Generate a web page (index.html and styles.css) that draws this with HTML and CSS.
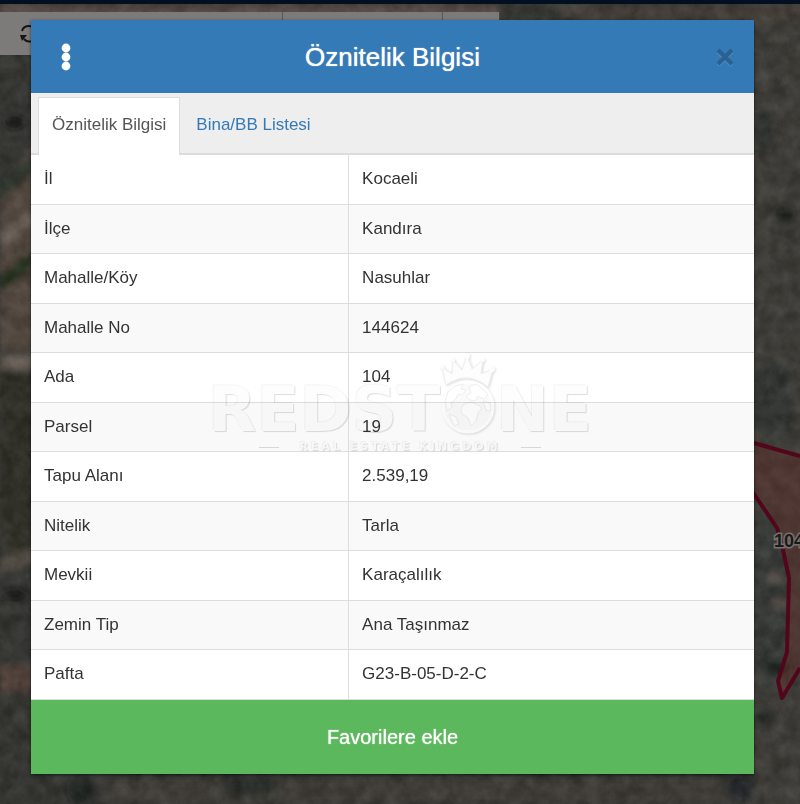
FILE: index.html
```html
<!DOCTYPE html>
<html lang="tr">
<head>
  <meta charset="UTF-8" />
  <meta name="viewport" content="width=device-width, initial-scale=1.0" />
  <title>Öznitelik Bilgisi</title>
  <link rel="stylesheet" href="styles.css">
</head>
<body>
  <div class="map-page">
    <svg class="map" viewBox="0 0 800 804" preserveAspectRatio="xMidYMid slice" aria-hidden="true">
      <defs>
        <filter id="soft" x="-20%" y="-20%" width="140%" height="140%"><feGaussianBlur stdDeviation="3" /></filter>
        <filter id="grain" x="0" y="0" width="100%" height="100%" color-interpolation-filters="sRGB">
          <feTurbulence type="fractalNoise" baseFrequency="0.07" numOctaves="4" seed="8" />
          <feColorMatrix values="0.6 0.4 0 0 -0.27  0.6 0.4 0 0 -0.27  0.6 0.4 0 0 -0.28  0 0 0 0 0.18" />
        </filter>
      </defs>
      <rect width="800" height="804" fill="#343431" />
      <rect x="745" width="55" height="804" fill="#3f3d38" />
      <g filter="url(#soft)">
        <path d="M0 4H500V22H0z" fill="#5a4d47" />
        <path d="M560 4H800V20H560z" fill="#443f38" />
        <path d="M0 202L40 130V350H0z" fill="#54493f" />
        <path d="M0 184L40 150V166L0 200z" fill="#2b3529" />
        <path d="M0 230L34 208V222L0 252z" fill="#6d6058" />
        <path d="M0 275L34 250V268L0 292z" fill="#27331f" />
        <path d="M0 292L36 268V350H0z" fill="#54483f" />
        <path d="M0 354H36V370H0z" fill="#6c635a" />
        <path d="M0 370H40V545L0 560z" fill="#2f2f28" />
        <path d="M0 562L34 546V562L0 576z" fill="#5c544c" />
        <path d="M0 665H34V692H0z" fill="#54433b" />
        <ellipse cx="14" cy="122" rx="10" ry="6" fill="#141915" />
        <ellipse cx="14" cy="596" rx="13" ry="6" fill="#121912" />
        <ellipse cx="784" cy="214" rx="9" ry="8" fill="#181e17" />
        <ellipse cx="764" cy="130" rx="9" ry="20" fill="#2c2f2b" />
        <ellipse cx="772" cy="400" rx="22" ry="40" fill="#323632" />
        <ellipse cx="770" cy="600" rx="18" ry="90" fill="#373b37" />
        <ellipse cx="775" cy="578" rx="7" ry="6" fill="#5d534c" />
        <ellipse cx="780" cy="603" rx="7" ry="5" fill="#594b46" />
        <ellipse cx="778" cy="667" rx="12" ry="8" fill="#141b16" />
        <ellipse cx="766" cy="718" rx="9" ry="8" fill="#252b26" />
        <path d="M100 780H730V804H100z" fill="#403d39" />
        <ellipse cx="82" cy="790" rx="12" ry="14" fill="#1d231f" />
        <ellipse cx="250" cy="788" rx="30" ry="8" fill="#262c27" />
        <ellipse cx="740" cy="788" rx="14" ry="12" fill="#22272a" />
      </g>
      <rect width="800" height="804" filter="url(#grain)" />
      <path d="M750 442L800 456V668L782 697L778 681L787 652L789 578L782 545L777 528L752 491z" fill="#6a302d" fill-opacity="0.4" />
      <path d="M750 442L800 456M752 491L777 528L782 545L789 578L787 652L778 681L782 698L800 668" fill="none" stroke="#51061c" stroke-width="4" stroke-linejoin="round" />
      <text class="parcel-label" x="774" y="547">104</text>
    </svg>
    <div class="top-bar"></div>
    <div class="toolbar">
      <button class="tool tool-refresh" type="button" aria-label="Yenile">
        <svg width="20" height="20" viewBox="0 0 20 20" aria-hidden="true">
          <path d="M3 7A7 7 0 0 1 16 6M17 13A7 7 0 0 1 5 15" fill="none" stroke="#151515" stroke-width="2" />
          <path d="M1 11H8L3 17zM19 9H12L17 3z" fill="#151515" />
        </svg>
      </button>
      <div class="tool"></div>
      <div class="tool"></div>
    </div>
  </div>

  <div class="overlay">
    <div class="modal" role="dialog" aria-labelledby="modalTitle">
      <div class="modal-header">
        <button class="icon-button" type="button" aria-label="Menü">
          <svg width="10" height="28" viewBox="0 0 10 28" fill="#fff" aria-hidden="true">
            <circle cx="5" cy="5" r="4.4" /><circle cx="5" cy="14" r="4.4" /><circle cx="5" cy="23" r="4.4" />
          </svg>
        </button>
        <h1 id="modalTitle">Öznitelik Bilgisi</h1>
        <button class="icon-button close" type="button" aria-label="Kapat">
          <svg width="18" height="20" viewBox="0 0 18 20" fill="none" stroke-width="4" aria-hidden="true">
            <path d="M2 5L16 19M16 5L2 19" stroke="#4585bd" />
            <path d="M2 3L16 17M16 3L2 17" stroke="#2a6191" />
          </svg>
        </button>
      </div>
      <nav class="tabs">
        <a class="tab active" href="#oznitelik">Öznitelik Bilgisi</a>
        <a class="tab" href="#bina">Bina/BB Listesi</a>
      </nav>
      <table class="attributes" id="oznitelik">
        <tbody>
          <tr><th scope="row">İl</th><td>Kocaeli</td></tr>
          <tr><th scope="row">İlçe</th><td>Kandıra</td></tr>
          <tr><th scope="row">Mahalle/Köy</th><td>Nasuhlar</td></tr>
          <tr><th scope="row">Mahalle No</th><td>144624</td></tr>
          <tr><th scope="row">Ada</th><td>104</td></tr>
          <tr><th scope="row">Parsel</th><td>19</td></tr>
          <tr><th scope="row">Tapu Alanı</th><td>2.539,19</td></tr>
          <tr><th scope="row">Nitelik</th><td>Tarla</td></tr>
          <tr><th scope="row">Mevkii</th><td>Karaçalılık</td></tr>
          <tr><th scope="row">Zemin Tip</th><td>Ana Taşınmaz</td></tr>
          <tr><th scope="row">Pafta</th><td>G23-B-05-D-2-C</td></tr>
        </tbody>
      </table>
      <button class="favorite" type="button">Favorilere ekle</button>
    </div>
  </div>

  <div class="watermark">
    <div class="brand">
      <span>REDST</span>
      <svg class="globe" width="56" height="84" viewBox="0 0 56 84" aria-hidden="true">
        <path d="M6 32L2 14L12 21L13 7L22 17L27 2L32 16L43 7L41 21L53 16L48 34Q28 17 6 32z" fill="#fdfdfd" />
        <g fill="#fdfdfd"><circle cx="2" cy="14" r="2" /><circle cx="13" cy="7" r="2" /><circle cx="27" cy="3" r="3" /><circle cx="43" cy="7" r="2" /><circle cx="52" cy="16" r="3" /></g>
        <circle cx="28" cy="54" r="25" fill="#fafafa" stroke="#fff" stroke-width="3" />
        <path d="M5 48L8 39L15 33L23 31L21 36L26 37L22 42L18 41L16 46L11 50L12 54L7 58zM29 34L36 31L43 36L48 42L44 46L38 43L35 48L30 47L26 43L31 40zM24 51L31 49L38 52L42 55L38 60L36 68L31 73L28 65L22 61L21 56zM43 48L50 50L51 58L46 57zM9 61L16 64L19 71L14 73z" fill="#fff" />
      </svg>
      <span>NE</span>
    </div>
    <div class="tagline">REAL ESTATE KINGDOM</div>
  </div>
</body>
</html>
```

FILE: styles.css
```css
* {
  box-sizing: border-box;
}
body {
  margin: 0;
  min-height: 100vh;
  font-family: "Liberation Sans", Arial, sans-serif;
  font-size: 17px;
  line-height: 24px;
  color: #333;
  background: #343431;
}
button {
  font-family: inherit;
  border: none;
  cursor: pointer;
}
.map-page {
  position: fixed;
  inset: 0;
}
.map {
  position: absolute;
  width: 100%;
  height: 100%;
}
.parcel-label {
  font-size: 18px;
  font-weight: bold;
  fill: #191919;
  stroke: #77716f;
  stroke-width: 3px;
  paint-order: stroke;
}
.top-bar {
  position: relative;
  height: 4px;
  background: #020f20;
}
.toolbar {
  position: relative;
  display: grid;
  grid-template-columns: 282fr 160fr 57fr;
  width: 499px;
  max-width: 100%;
  height: 43px;
  margin-top: 8px;
  background: #7d7b7a;
}
.tool {
  border-left: 1px solid #555;
}
.tool-refresh {
  display: flex;
  align-items: center;
  padding: 0 19px;
  border: none;
  background: none;
}
.overlay {
  position: relative;
  padding: 20px 46px 31px 31px;
}
.modal {
  background: #fff;
  box-shadow: 0 1px 3px rgba(0, 0, 0, 0.6);
}
.modal-header {
  display: flex;
  align-items: center;
  justify-content: space-between;
  height: 73px;
  padding: 0 14px 0 20px;
  background: #337ab7;
  color: #fff;
}
.modal-header h1 {
  margin: 0;
  font-size: 26px;
  font-weight: normal;
  text-shadow: 0 0 1px #fff;
}
.icon-button {
  display: flex;
  align-items: center;
  justify-content: center;
  width: 30px;
  height: 40px;
  padding: 0;
  background: none;
}
.close {
  width: 36px;
  padding-left: 6px;
}
.tabs {
  display: flex;
  gap: 2px;
  padding: 4px 7px 0;
  background: #eee;
  border-bottom: 2px solid #ddd;
}
.tab {
  padding: 15px 13px 18px;
  margin-bottom: -2px;
  border: 1px solid transparent;
  border-bottom: none;
  color: #337ab7;
  text-decoration: none;
}
.tab.active {
  background: #fff;
  border-color: #ddd;
  color: #555;
}
.attributes {
  width: 100%;
  border-collapse: separate;
  border-spacing: 0;
  table-layout: fixed;
}
.attributes th,
.attributes td {
  padding: 12px 13px 13px;
  border-bottom: 1px solid #ddd;
  font-weight: normal;
  text-align: left;
}
.attributes th {
  width: 44%;
  border-right: 1px solid #ddd;
}
.attributes tr:nth-child(even) > * {
  padding-bottom: 12px;
  background: #f9f9f9;
}
.favorite {
  display: block;
  width: 100%;
  padding: 24px;
  background: #5cb85c;
  color: #fff;
  font-size: 20px;
  line-height: 26px;
  text-shadow: 0 0 1px #fff;
}
.watermark {
  position: absolute;
  top: 353px;
  left: 0;
  right: 0;
  mix-blend-mode: multiply;
  pointer-events: none;
  color: #fdfdfd;
  font-family: "DejaVu Sans", sans-serif;
  font-weight: bold;
  text-align: center;
  text-shadow: 1px 1px 1px #ddd, -1px -1px 1px #f4f4f4;
}
.brand {
  display: flex;
  justify-content: center;
  align-items: flex-end;
  height: 84px;
  font-size: 63px;
  line-height: 54px;
}
.globe {
  filter: drop-shadow(1px 1px 1px #ddd);
}
.globe path {
  stroke: #eee;
}
.tagline {
  display: flex;
  justify-content: center;
  align-items: center;
  gap: 20px;
  font-size: 11px;
  line-height: 20px;
  letter-spacing: 3px;
}
.tagline::before,
.tagline::after {
  content: "";
  width: 20px;
  height: 1px;
  background: #ddd;
}
```
